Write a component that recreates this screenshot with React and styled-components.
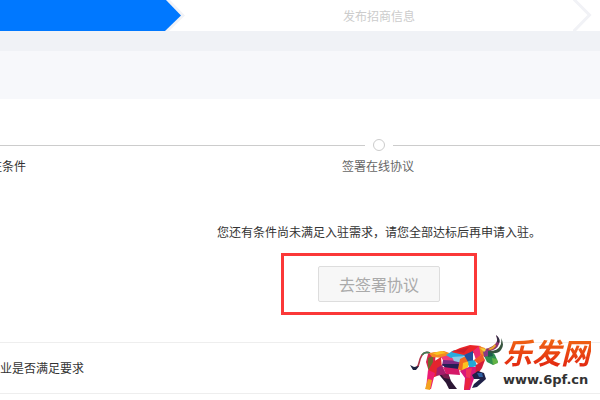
import React from 'react'
import styled, { createGlobalStyle } from 'styled-components'

function App() {
  return (
    <>
      <GlobalStyle />
      <Page>
        <Progress>
          <CurrentStage>
            <StageArrow />
          </CurrentStage>
          <NextStage>
            <StageName>发布招商信息</StageName>
            <Chevron viewBox="0 0 19 31" aria-hidden="true">
              <path d="M0 -1.500 L16.500 15 L0 32" fill="none" stroke="#f1f2f6" strokeWidth="3" />
            </Chevron>
          </NextStage>
        </Progress>
        <Band />
        <TitleBar />

        <main>
          <Track>
            <LeftLine />
            <Dot />
            <Line />
          </Track>
          <Labels>
            <PastLabel>驻条件</PastLabel>
            <Label>签署在线协议</Label>
          </Labels>

          <Content>
            <Message>您还有条件尚未满足入驻需求，请您全部达标后再申请入驻。</Message>
            <Highlight>
              <SignButton type="button">去签署协议</SignButton>
            </Highlight>
          </Content>

          <Requirement>业是否满足要求</Requirement>
        </main>

        <Logo>
          <Bull />
          <Brand>
            <BrandName>乐发网</BrandName>
            <BrandUrl>www.6pf.cn</BrandUrl>
          </Brand>
        </Logo>
      </Page>
    </>
  )
}

export default App


// bull made of coloured facets
function Bull() {
  return (
    <BullSvg viewBox="0 0 93 57" aria-hidden="true">
      {/* tail */}
      <path d="M20 18 Q15 16 12 20 Q10 23 9 28 Q8 33 4 34" fill="none" stroke="#b0354a" strokeWidth="1.6" />
      <path d="M20 18 Q15 16 12 20" fill="none" stroke="#3f7d55" strokeWidth="1.6" />
      <path d="M0 30 L4 32 L9 31 L6 35 L3 35 Z" fill="#1b2340" />

      {/* far hind leg */}
      <path d="M28 38 L38 38 L41 46 L47 54 L39 54 L36 48 L31 42 Z" fill="#2c1634" />
      <path d="M29 37 L38 38 L40 44 L34 43 Z" fill="#7a1c4c" />

      {/* hip and hind leg */}
      <path d="M18 19 L26 17 L25 27 L19 37 L16 27 Z" fill="#d8234b" />
      <path d="M18 23 L23 21 L23 28 L18 35 Z" fill="#6d6a2d" />
      <path d="M19 18 L34 16 L42 19 L33 23 L22 22 Z" fill="#f58a1f" />
      <path d="M22 18 L32 16 L36 18 L27 20 Z" fill="#f9c21f" />
      <path d="M23 27 L31 22 L32 34 L27 41 L22 43 L18 37 Z" fill="#e5242e" />
      <path d="M18 35 L25 38 L23 46 L21 54 L16 54 L17 44 Z" fill="#ec1c74" />
      <path d="M18 44 L22 45 L20 55 L15 54 Z" fill="#f3a21f" />
      <path d="M27 33 L32 30 L36 39 L26 41 Z" fill="#a51d6c" />

      {/* flank */}
      <path d="M31 22 L43 19 L50 25 L34 27 Z" fill="#ef3b7c" />
      <path d="M33 25 L52 26 L49 30 L32 31 Z" fill="#7d2a83" />
      <path d="M32 29 L50 29 L48 36 L36 34 Z" fill="#251f55" />
      <path d="M33 32 L49 34 L50 40 L36 39 Z" fill="#d51968" />
      <path d="M36 20 L44 15 L58 17 L53 22 L41 23 Z" fill="#29abe0" />
      <path d="M42 22 L56 21 L52 28 L44 26 Z" fill="#8ccbe8" />

      {/* hump and shoulder */}
      <path d="M41 17 L50 13 L60 10 L71 11 L64 18 L54 20 Z" fill="#ea2427" />
      <path d="M44 16 L59 12 L54 18 Z" fill="#c91e2d" />
      <path d="M50 24 L56 21 L61 27 L53 37 L48 34 Z" fill="#f26a21" />
      <path d="M53 28 L59 26 L58 32 L52 38 Z" fill="#fbc41d" />
      <path d="M54 20 L63 16 L63 26 L58 27 Z" fill="#244f9c" />
      <path d="M58 26 L65 25 L67 31 L59 33 Z" fill="#25a9d6" />
      <path d="M63 16 L69 11 L72 19 L66 25 Z" fill="#ee2a70" />
      <path d="M69 11 L75 13 L76 22 L71 21 Z" fill="#f28a24" />
      <path d="M64 25 L72 19 L75 25 L70 31 Z" fill="#f15a29" />
      <path d="M66 30 L75 25 L72 33 L67 40 L64 36 Z" fill="#d41f3a" />

      {/* front leg */}
      <path d="M50 36 L59 32 L66 32 L65 41 L62 49 L60 55 L54 55 L55 43 Z" fill="#d7197c" />
      <path d="M56 34 L62 33 L60 43 L56 42 Z" fill="#f0355c" />
      <path d="M56 43 L61 43 L59 54 L54 55 Z" fill="#ea2340" />

      {/* raised leg */}
      <path d="M62 40 L68 36 L74 38 L76 44 L67 52 L62 53 L64 49 L70 44 L64 44 Z" fill="#1f2148" />
      <path d="M67 38 L72 38 L73 42 L69 42 Z" fill="#2d5fa3" />

      {/* head */}
      <path d="M73 14 L80 14 L85 20 L88 27 L83 30 L77 27 L74 21 Z" fill="#2f8f4f" />
      <path d="M73 14 L79 15 L78 21 L74 22 Z" fill="#8a3a83" />
      <path d="M78 16 L82 17 L83 21 L78 22 Z" fill="#1f5b4c" />
      <path d="M82 23 L87 24 L88 28 L83 30 Z" fill="#62b346" />
      <path d="M70 13 L77 14 L74 17 Z" fill="#f4d23a" />

      {/* horns */}
      <path d="M75 14 Q83 12 86 8 Q88 5 86 0 Q91 4 89 9 Q87 15 79 16 Z" fill="#8d2f6b" />
      <path d="M79 16 Q88 16 90 11 Q92 8 91 3 Q95 10 91 15 Q88 19 81 18 Z" fill="#38553f" />
      <path d="M86 0 Q91 4 89 8 L87 7 Q88 4 86 0 Z" fill="#2b3040" />
      <path d="M78 14 Q83 12 85 9 L86 11 Q84 14 80 15 Z" fill="#e9a62c" />
    </BullSvg>
  )
}

const GlobalStyle = createGlobalStyle`
  body {
    margin: 0;
    background: #fff;
    color: #333;
    font-family: "Noto Sans CJK SC", sans-serif;
    font-size: 12px;
    line-height: 18px;
  }
`

const Page = styled.div`
  position: relative;
  min-height: 400px;
  overflow: hidden;
`

const Progress = styled.header`
  display: flex;
  height: 31px;
`

const CurrentStage = styled.div`
  display: flex;
  flex: 0 0 185px;
  background: #f1f2f6;
  clip-path: polygon(0 0, calc(100% - 15px) 0, 100% 50%, calc(100% - 16px) 100%, 0 100%);
`

const StageArrow = styled.div`
  flex: 1;
  margin-right: 4px;
  background: #0078ff;
  clip-path: polygon(0 0, calc(100% - 15px) 0, 100% 50%, calc(100% - 16px) 100%, 0 100%);
`

const NextStage = styled.div`
  display: flex;
  align-items: center;
  flex: 1;
  padding-right: 8px;
  color: #ccc;
`

const StageName = styled.span`
  flex: 1;
  text-align: center;
`

const Chevron = styled.svg`
  width: 19px;
  height: 31px;
`

const Band = styled.div`
  height: 20px;
  background: #f0f2f6;
`

const TitleBar = styled.div`
  height: 48px;
  background: #f7f8fb;
`

const Track = styled.div`
  display: flex;
  align-items: center;
  padding-top: 40px;
`

const Line = styled.div`
  flex: 1 1 0;
  height: 1px;
  background: #ccc;
`

const LeftLine = styled(Line)`
  flex-basis: 158px;
`

const Dot = styled.div`
  box-sizing: border-box;
  width: 12px;
  height: 12px;
  margin: 0 8px;
  border: 1px solid #ccc;
  border-radius: 50%;
`

const Labels = styled.div`
  display: flex;
  padding-top: 6px;
`

const PastLabel = styled.div`
  display: flex;
  justify-content: flex-end;
  width: 26px;
  white-space: nowrap;
`

const Label = styled.div`
  flex: 1;
  padding-left: 130px;
  color: #666;
  text-align: center;
`

const Content = styled.div`
  display: flex;
  flex-direction: column;
  align-items: center;
  padding: 48px 0 27px 158px;
`

const Message = styled.p`
  margin: 0 0 12px;
`

const Highlight = styled.div`
  padding: 10px 34px;
  border: 3px solid #fb3838;
`

const SignButton = styled.button`
  display: block;
  width: 122px;
  height: 36px;
  padding: 0;
  border: 1px solid #ddd;
  border-radius: 2px;
  background: #f7f7f7;
  color: #aaa;
  font-family: inherit;
  font-size: 16px;
  line-height: 24px;
`

const Requirement = styled.div`
  padding: 16px 0;
  border-top: 1px solid #eee;
  border-bottom: 1px solid #eee;
`

/* watermark over the bottom corner */
const Logo = styled.div`
  position: absolute;
  right: 9px;
  bottom: 8px;
  display: flex;
  align-items: flex-end;
`

const BullSvg = styled.svg`
  width: 93px;
  height: 57px;
`

const Brand = styled.div`
  display: flex;
  flex-direction: column;
  width: 88px;
  padding-bottom: 4px;
`

const BrandName = styled.span`
  background: linear-gradient(#f47a14, #e01b10);
  background-clip: text;
  color: transparent;
  font-size: 29px;
  font-style: italic;
  font-weight: 700;
  line-height: 42px;
  white-space: nowrap;
`

const BrandUrl = styled.span`
  color: #333;
  font-family: "DejaVu Sans", sans-serif;
  font-size: 13px;
  font-weight: 700;
  line-height: 16px;
`
